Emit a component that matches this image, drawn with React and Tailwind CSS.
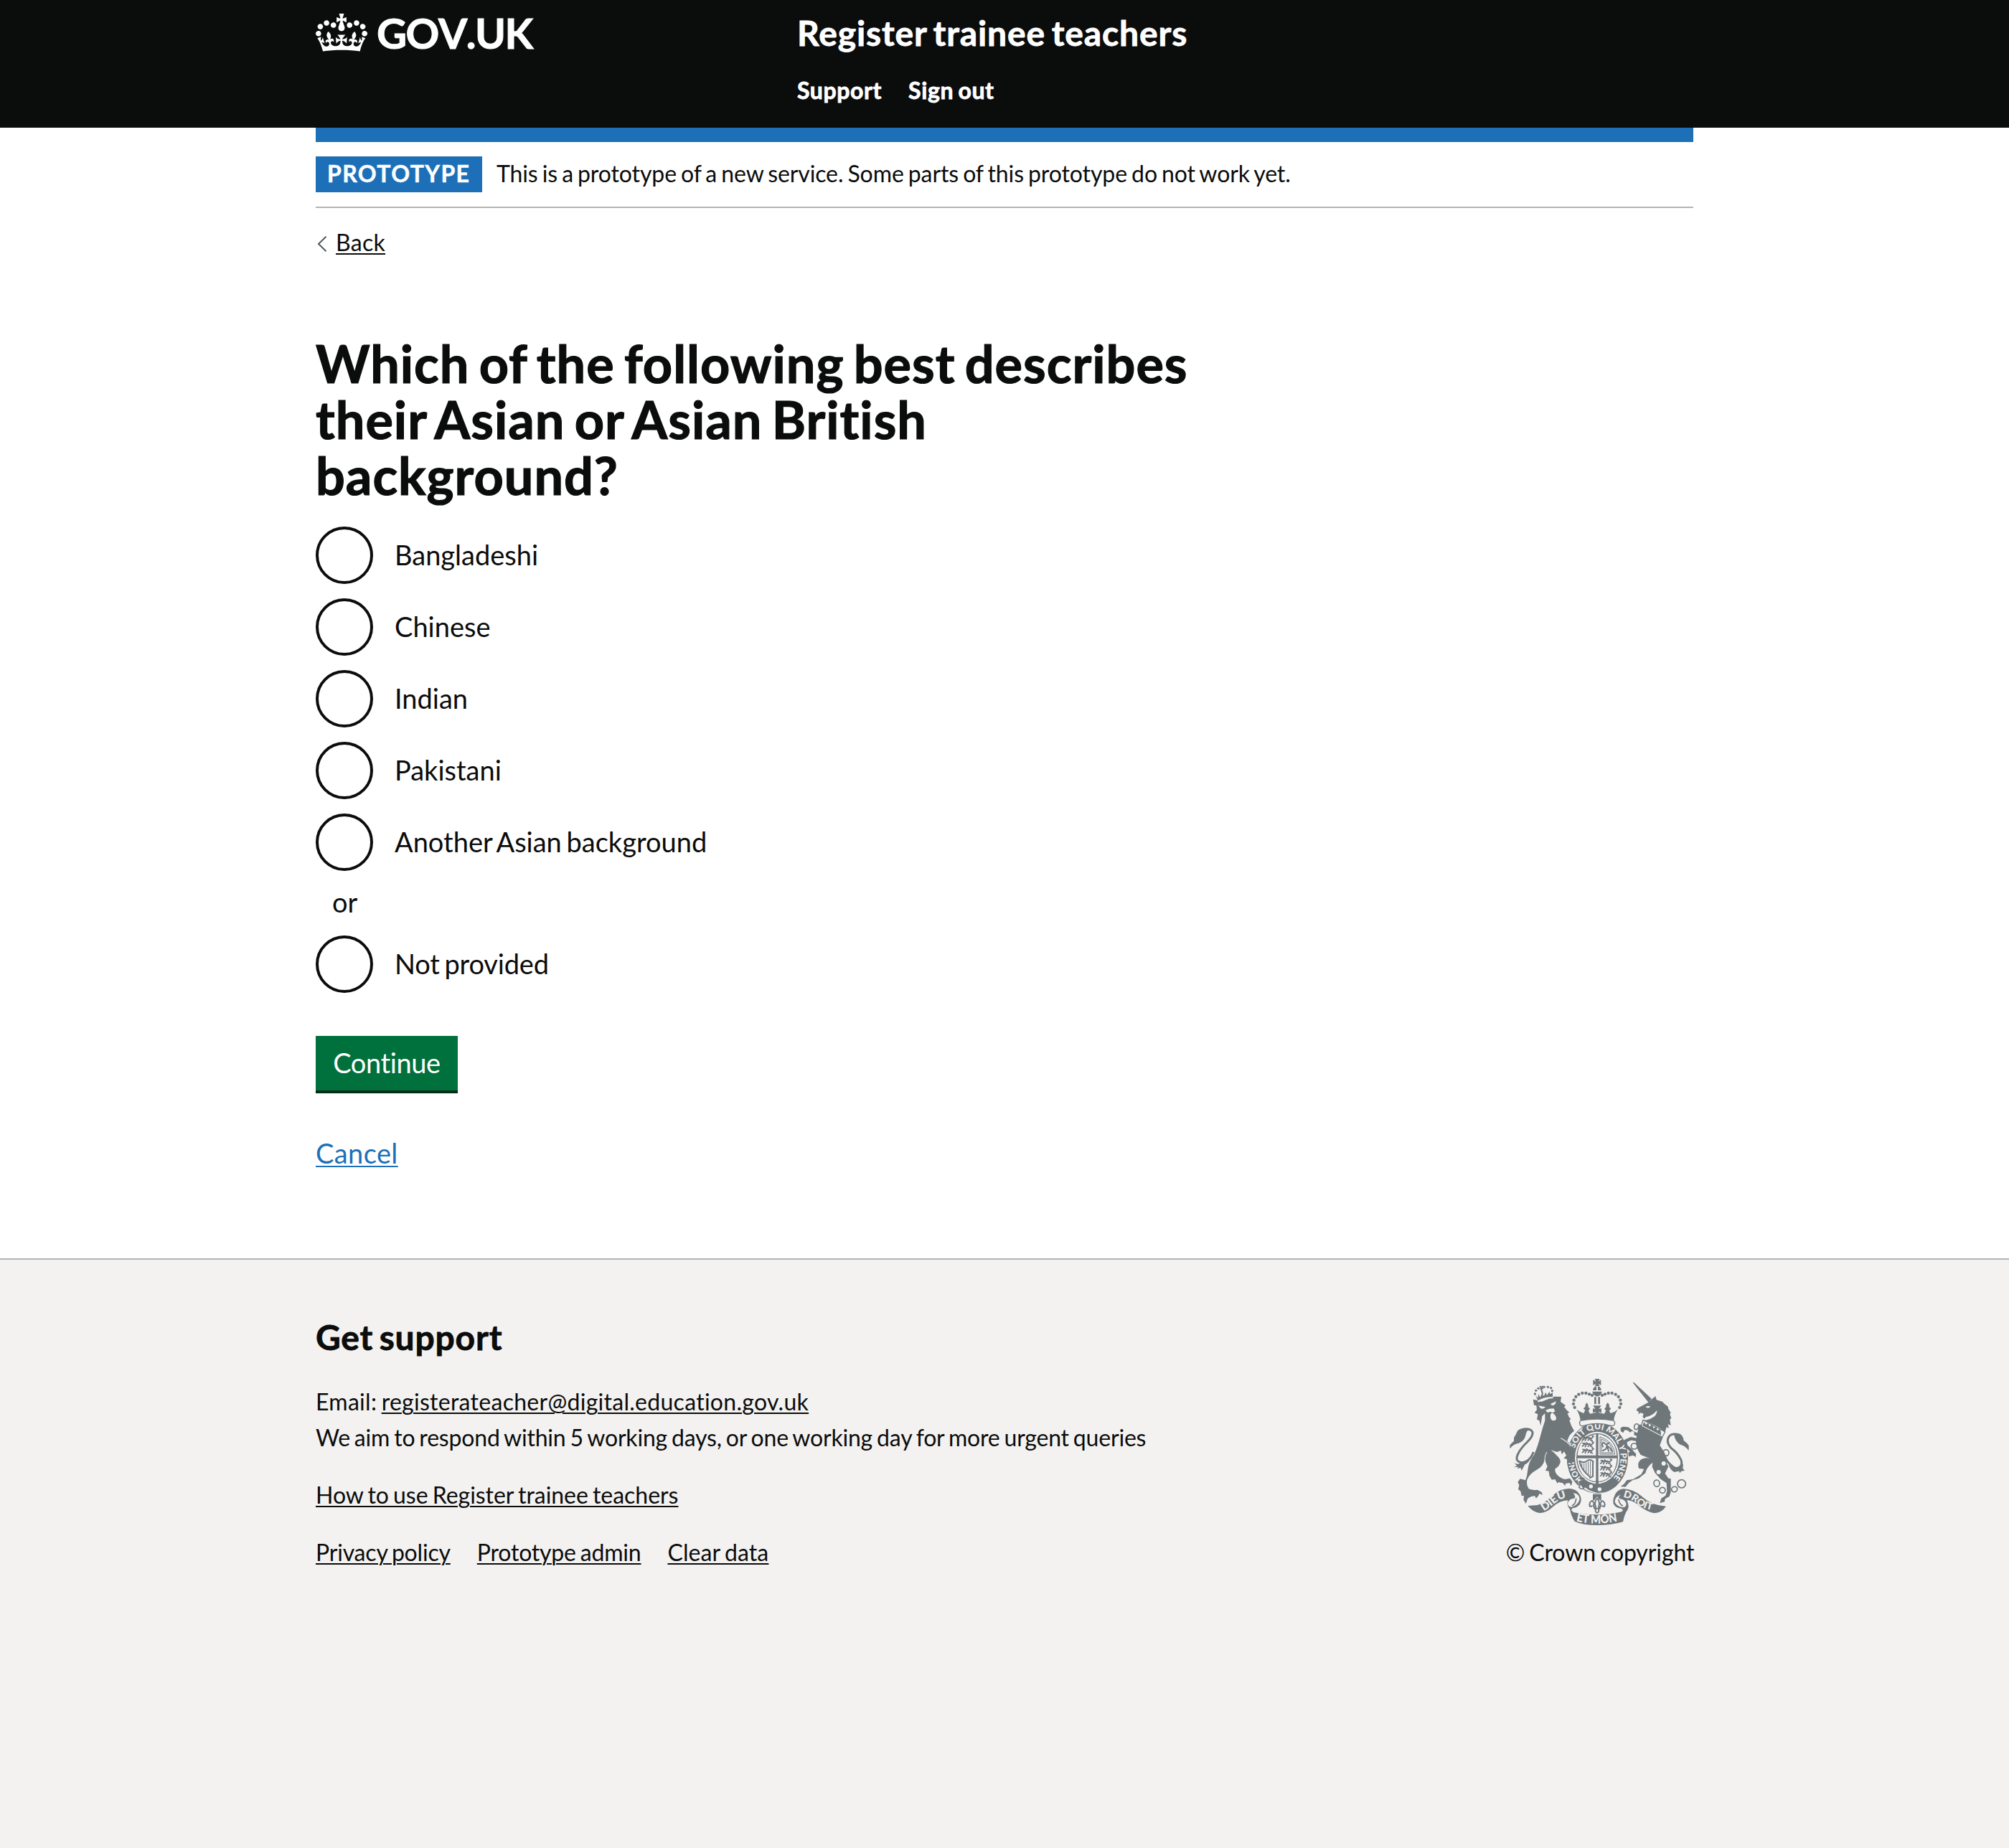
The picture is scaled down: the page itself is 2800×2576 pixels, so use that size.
const ANSWERS = ["Bangladeshi", "Chinese", "Indian", "Pakistani", "Another Asian background"];

function Crown({ className }) {
  return (
    <svg className={className} viewBox="0 0 132 97" fill="currentColor" fillRule="evenodd" aria-hidden="true">
      <path d="M25 30.2c3.5 1.5 7.7-.2 9.1-3.7 1.5-3.6-.2-7.8-3.9-9.2-3.6-1.4-7.6.3-9.1 3.9-1.4 3.5.3 7.5 3.9 9zM9 39.5c3.6 1.5 7.8-.2 9.2-3.7 1.5-3.6-.2-7.8-3.9-9.1-3.6-1.5-7.6.2-9.1 3.8-1.4 3.5.3 7.5 3.8 9zM4.4 57.2c3.5 1.5 7.7-.2 9.1-3.8 1.5-3.6-.2-7.7-3.9-9.1-3.5-1.5-7.6.3-9.1 3.8-1.4 3.5.3 7.6 3.9 9.1zm38.3-21.4c3.5 1.5 7.7-.2 9.1-3.8 1.5-3.6-.2-7.7-3.9-9.1-3.6-1.5-7.6.3-9.1 3.8-1.3 3.6.4 7.7 3.9 9.1zm64.4-5.6c-3.6 1.5-7.8-.2-9.1-3.7-1.5-3.6.2-7.8 3.8-9.2 3.6-1.4 7.7.3 9.2 3.9 1.3 3.5-.4 7.5-3.9 9zm15.9 9.3c-3.6 1.5-7.7-.2-9.1-3.7-1.5-3.6.2-7.8 3.7-9.1 3.6-1.5 7.7.2 9.2 3.8 1.5 3.5-.3 7.5-3.8 9zm4.7 17.7c-3.6 1.5-7.8-.2-9.2-3.8-1.5-3.6.2-7.7 3.9-9.1 3.6-1.5 7.7.3 9.2 3.8 1.3 3.5-.4 7.6-3.9 9.1zM89.3 35.8c-3.6 1.5-7.8-.2-9.2-3.8-1.4-3.6.2-7.7 3.9-9.1 3.6-1.5 7.7.3 9.2 3.8 1.4 3.6-.3 7.7-3.9 9.1zM69.7 17.7l8.9 4.7V9.3l-8.9 2.8c-.2-.3-.5-.6-.9-.9L72.4 0H59.6l3.5 11.2c-.3.3-.6.5-.9.9l-8.8-2.8v13.1l8.8-4.7c.3.3.6.7.9.9l-5 15.4v.1c-.2.8-.4 1.6-.4 2.4 0 4.1 3.1 7.5 7 8.1h.2c.3 0 .7.1 1 .1.4 0 .7 0 1-.1h.2c4-.6 7.1-4.1 7.1-8.1 0-.8-.1-1.7-.4-2.4V34l-5.1-15.4c.4-.2.7-.6 1-.9zM66 92.8c16.9 0 32.8 1.1 47.1 3.2 4-16.9 8.9-26.7 14-33.5l-9.6-3.4c1 4.9 1.1 7.2 0 10.2-1.5-1.4-3-4.3-4.2-8.7L108.6 76c2.8-2 5-3.2 7.5-3.3-4.4 9.4-10 11.9-13.6 11.2-4.3-.8-6.3-4.6-5.6-7.9 1-4.7 5.7-5.9 8-.5 4.3-8.7-3-11.4-7.6-8.8 7.1-7.2 7.9-13.5 2.1-21.1-8 6.1-8.1 12.3-4.5 20.8-4.7-5.4-12.1-2.5-9.5 6.2 3.4-5.2 7.9-2 7.2 3.1-.6 4.3-6.4 7.8-13.5 7.2-10.3-.9-10.9-8-11.2-13.8 2.5-.5 7.1 1.8 11 7.3L80.2 60c-4.1 4.4-8 5.3-12.3 5.4 1.4-4.4 8-11.6 8-11.6H55.5s6.4 7.2 7.9 11.6c-4.2-.1-8-1-12.3-5.4l1.4 16.4c3.9-5.5 8.5-7.7 10.9-7.3-.3 5.8-.9 12.8-11.1 13.8-7.2.6-12.9-2.9-13.5-7.2-.7-5 3.8-8.3 7.1-3.1 2.7-8.7-4.6-11.6-9.4-6.2 3.7-8.5 3.6-14.7-4.6-20.8-5.8 7.6-5 13.9 2.2 21.1-4.7-2.6-11.9.1-7.7 8.8 2.3-5.5 7.1-4.2 8.1.5.7 3.3-1.3 7.1-5.7 7.9-3.5.7-9-1.8-13.5-11.2 2.5.1 4.7 1.3 7.5 3.3l-4.7-15.4c-1.2 4.4-2.7 7.2-4.3 8.7-1.1-3-.9-5.3 0-10.2l-9.5 3.4c5 6.9 9.9 16.7 14 33.5 14.8-2.1 30.8-3.2 47.7-3.2z" />
    </svg>
  );
}

const INK = "#6f777b";
const PAPER = "#f3f2f1";

// Pearls along the arches of the large crown; the right side mirrors the left about x = 438.
const PEARLS = [[417, 135], [405, 130], [391, 126], [376, 126], [361, 131], [349, 141], [341, 155], [339, 171], [344, 186]];
const LION_PEARLS = [[178, 129], [182, 115], [192, 106], [216, 100], [232, 100], [245, 104], [250, 116]];
const CHAIN = [[602, 266, 9, 12, 15], [593, 348, 13, 12, 0], [726, 375, 12, 13, 0], [687, 503, 12, 14, -10], [711, 532, 12, 12, 0], [761, 528, 12, 11, -20]];

function Lions({ x, y }) {
  return (
    <g transform={`translate(${x} ${y})`} fill="none" stroke={INK} strokeWidth="5.5" strokeLinecap="round" strokeLinejoin="round">
      {[0, 26, 52].map((dy) => (
        <path key={dy} d={`M2 ${dy + 18}l6 -5l2 -8l8 4l14 -1l8 4l-4 6l8 3M12 ${dy + 10}l-8 -5M18 ${dy + 12}l-4 8M32 ${dy + 12}l-6 7M42 ${dy + 10}l7 -8l-6 -2M20 ${dy + 3}l5 6`} />
      ))}
    </g>
  );
}

function RoyalArms({ className }) {
  return (
    <svg className={className} viewBox="60 60 780 630" fill={INK} aria-hidden="true">
      {/* Scrolls */}
      <path d="M148 597L188 594Q216 588 250 556Q284 524 322 525Q354 527 366 552Q376 570 366 590Q352 606 338 606Q322 612 340 625Q390 634 438 634Q490 634 540 622Q552 614 538 608Q514 606 506 588Q502 572 512 552Q522 530 546 526Q592 528 628 560Q664 594 726 599Q708 626 676 628Q640 620 606 590Q582 574 562 574Q574 596 566 612Q552 632 546 664Q500 678 438 678Q376 678 344 662Q330 642 324 612Q308 594 316 574Q282 574 250 604Q224 628 196 627Q168 622 148 597Z" />
      <g fill={PAPER}>
        <path d="M338 544Q366 546 364 572Q358 592 332 602Q314 602 315 585Q322 566 342 566Q352 562 338 544Z" />
        <path d="M536 550Q512 560 512 582Q522 600 544 604Q560 604 560 588Q554 570 534 568Q522 566 536 550Z" />
      </g>
      <g fill="none" stroke={INK} strokeWidth="5" strokeLinecap="round">
        <path d="M334 596Q348 588 350 568" />
        <path d="M544 597Q530 588 528 572" />
      </g>

      {/* Garter, cut clear of the animals by a light rim */}
      <ellipse cx="439" cy="397" rx="135" ry="155" fill={PAPER} />
      <ellipse cx="439" cy="397" rx="128" ry="148" />
      <ellipse cx="438" cy="396" rx="93" ry="109" fill={PAPER} />
      <ellipse cx="438" cy="396" rx="87" ry="103" />
      <g fill={PAPER}>
        <path d="M433 297V386H356Q360 312 433 297ZM443 297V386H520Q514 312 443 297ZM433 398V496Q362 486 355 398ZM443 398V496Q514 486 521 398Z" />
      </g>
      <Lions x={374} y={304} />
      <Lions x={450} y={402} />
      {/* Scottish quarter */}
      <g fill="none" stroke={INK}>
        <path strokeWidth="3" d="M450 308V381H512Q508 328 450 308ZM456 318V375H504Q500 334 456 318Z" />
        <path strokeWidth="6" strokeLinecap="round" d="M468 334L480 346L474 360L462 366M480 346L494 358L498 368M476 340L488 334M480 350L486 368M462 350Q456 338 464 332" />
      </g>
      {/* Harp */}
      <g fill="none" stroke={INK} strokeLinecap="round">
        <path strokeWidth="6" d="M364 412Q372 448 406 474M364 410Q384 420 398 408Q410 400 422 412M420 412V474L408 480" />
        <path strokeWidth="3" d="M374 420V436M383 420V450M392 418V460M401 414V468M410 412V472" />
      </g>
      <rect x="432" y="490" width="12" height="16" />

      {/* Mottoes */}
      <defs>
        <path id="arms-honi" d="M379 490A98 118 0 0 1 341 408" />
        <path id="arms-garter" d="M345 358A98 118 0 0 1 536 396A98 118 0 0 1 496 491" />
        <path id="arms-dieu" d="M214 619Q238 606 264 584Q290 562 326 562" />
        <path id="arms-mon" d="M350 661Q438 680 526 661" />
        <path id="arms-droit" d="M546 561Q580 566 606 590Q636 612 684 617" />
      </defs>
      <g fill={PAPER} className="font-['Lato',sans-serif] font-black">
        <text fontSize="33"><textPath href="#arms-honi" textLength="88" lengthAdjust="spacingAndGlyphs">HONI</textPath></text>
        <text fontSize="35"><textPath href="#arms-garter" textLength="396" lengthAdjust="spacingAndGlyphs">SOIT QUI MAL Y PENSE</textPath></text>
        <text fontSize="44"><textPath href="#arms-dieu" textLength="112" lengthAdjust="spacingAndGlyphs">DIEU</textPath></text>
        <text fontSize="49"><textPath href="#arms-mon" textLength="174" lengthAdjust="spacingAndGlyphs">ET MON</textPath></text>
        <text fontSize="41"><textPath href="#arms-droit" textLength="134" lengthAdjust="spacingAndGlyphs">DROIT</textPath></text>
      </g>

      {/* Garter buckle and strap */}
      <path d="M370 480Q346 490 364 506Q352 522 374 528L392 514Q440 540 506 514Q496 530 470 540Q420 552 380 524L362 500Z" fill={PAPER} />
      <path d="M378 510L386 494Q434 516 494 508L520 512Q480 546 438 542Q402 538 378 510Z" />
      <path d="M366 482Q388 476 386 496Q370 506 386 518Q378 534 362 520Q372 504 360 498Q386 490 366 482Z" fill="none" stroke={INK} strokeWidth="5" />
      <g fill={PAPER}>
        <circle cx="412" cy="516" r="8" />
        <circle cx="448" cy="528" r="8" />
      </g>

      {/* Pendant lily */}
      <path d="M420 548H455V578L446 570L438 558L429 570L420 578Z" />
      <path d="M438 564Q424 584 432 602Q424 606 422 596Q430 586 416 576Q402 584 408 600L418 598M438 564Q452 584 444 602Q452 606 454 596Q446 586 460 576Q474 584 468 600L458 598M424 608H452M432 610Q428 624 438 626Q448 624 444 610" fill="none" stroke={INK} strokeWidth="6" strokeLinejoin="round" />

      {/* Large crown */}
      <path d="M428 66H449L443 77L454 70V93L443 86L449 97H428L433 86L421 93V70L433 77Z" />
      <path d="M428 99H435V114H420Q421 104 428 99ZM441 99H448Q454 104 456 114H441ZM418 119H458Q456 136 438 140Q420 136 418 119Z" />
      {PEARLS.map(([x, y]) => (
        <g key={x}>
          <circle cx={x} cy={y} r="6.5" />
          <circle cx={876 - x} cy={y} r="6.5" />
        </g>
      ))}
      <path d="M426 142H434V172H426ZM442 142H450V172H442ZM421 178H455L446 192L456 190V208L444 204L450 220H426L432 204L420 208V190L430 192Z" />
      <path d="M352 194Q368 206 382 210L388 196Q374 192 388 184Q386 176 394 166Q404 176 400 184Q414 192 401 198L408 212L438 206L468 212L475 198Q462 192 476 184Q472 176 482 166Q492 176 488 184Q502 192 488 198L494 210Q512 206 524 194Q508 220 508 240Q438 228 368 240Q366 218 352 194Z" />
      <g fill={PAPER}>
        <circle cx="377" cy="202" r="5" />
        <circle cx="411" cy="202" r="5" />
        <circle cx="465" cy="202" r="5" />
        <circle cx="499" cy="202" r="5" />
      </g>
      <path d="M370 240Q362 246 366 258Q370 266 380 262Q438 244 496 262Q510 264 512 252Q512 244 506 240Q438 228 370 240Z" fill={PAPER} stroke={INK} strokeWidth="4" />

      {/* Lion */}
      <path d="M170 152L188 156L205 162L258 140L288 141L285 162L306 178L300 184L312 198L322 207L314 211L320 226L328 234L322 240L330 262L342 284Q320 298 313 326L334 350L346 384L344 416L332 409L334 425L320 415L312 421L314 402L298 399L309 386L300 370L290 382L286 366L270 372L244 364Q262 376 270 388Q286 400 284 416Q276 436 264 440Q258 450 268 464Q280 480 304 486L324 482L334 496L330 514L322 501L306 504L304 514L294 502L276 498L272 504L262 486L248 488L238 470L236 452L222 450L230 432L218 404Q214 430 186 446Q156 462 146 486Q140 510 152 526Q170 534 188 530L206 540L210 552L196 546L192 556L182 566L178 556L162 558L148 566L140 588L130 572L132 554L122 556L118 536L108 528L112 510L106 498L116 484L138 490Q146 472 148 446Q152 412 174 384Q190 348 202 300Q210 270 220 240L220 210L208 222L202 262L196 240L186 236L190 214L176 208L186 196L184 178L174 176Z" />
      <path d="M286 314Q312 326 328 348" fill="none" stroke={PAPER} strokeWidth="3.5" />
      <path d="M228 372Q212 396 224 428" fill="none" stroke={PAPER} strokeWidth="3" />
      <g fill={PAPER}>
        <path d="M192 178L222 184Q214 194 202 190ZM242 172L266 160Q264 176 252 178ZM222 198L238 191L256 190L262 202L252 208L240 203L232 208ZM244 212Q250 206 257 212Q270 226 266 236Q256 246 246 236Q240 226 244 212Z" />
      </g>
      <path d="M172 372Q158 410 126 416Q92 414 106 382Q118 356 146 330Q170 306 168 290Q160 272 140 280" fill="none" stroke={INK} strokeWidth="9" />
      <path d="M154 272Q126 268 106 282Q98 300 90 312L90 326Q78 336 73 344L73 358Q88 338 108 336Q132 328 138 306Q140 288 154 272ZM92 418Q106 426 116 418L132 410L156 406Q148 420 136 424L122 450L118 438L104 442L108 434L90 436L102 430Z" />
      {/* Lion's crown */}
      <g>
        {LION_PEARLS.map(([x, y]) => <circle key={`${x}-${y}`} cx={x} cy={y} r="5" />)}
        <path d="M198 97L212 108M211 96L200 110M204 108L210 130" stroke={INK} strokeWidth="6" fill="none" />
        <path d="M180 134L190 146L192 130L200 143L208 126L215 139L223 122L228 136L238 120L242 130L252 122L252 146Q218 146 192 162Z" />
        <path d="M188 158Q220 140 254 142L253 148Q220 148 192 164Z" fill={PAPER} />
      </g>

      {/* Unicorn */}
      <path d="M587 82L592 81L666 150L652 164ZM652 164L668 150L682 138L686 154L712 162L716 168L734 182L736 192L746 208L742 214L748 230L742 236L746 260L734 256L738 272L728 268L722 288L690 266L634 240Q650 232 664 220L648 228L636 232L628 226L632 212L620 208L610 214L612 204L602 198L606 190Q630 176 652 164Z" />
      <g fill={PAPER}>
        <path d="M640 183Q650 177 661 182Q656 189 647 187ZM640 226Q668 222 688 198Q690 212 676 224Q660 236 638 240Z" />
      </g>
      <path d="M614 256Q656 268 712 312L700 344L718 372L734 408Q724 416 736 432L722 462L736 482L746 484L746 540L740 558L722 568L720 580L700 586L706 566L724 554L730 536L728 502L704 486L680 460L668 434L670 416Q644 436 640 460L612 482L586 490L570 502L556 518L536 516L550 506L562 490L588 486L622 466L634 444L612 440Q604 414 624 402Q644 392 666 402L620 384Q606 364 600 336L604 300Z" />
      {/* Forelegs */}
      <g fill="none" stroke={INK} strokeWidth="13" strokeLinejoin="round">
        <path d="M612 302L586 290L566 274L548 273L542 288" />
        <path d="M612 322L580 316L556 326L558 346L580 366L588 376" />
      </g>
      <path d="M534 276L542 266L552 276L546 292ZM568 374L584 366L600 378L600 393L588 386L570 391Z" />
      {/* Collar coronet */}
      <path d="M630 238L722 288L710 310L622 264Z" fill={PAPER} stroke={INK} strokeWidth="4" />
      <path d="M628 262L634 246L642 258L652 250L656 266L668 256L674 274L686 264L688 282L702 276L706 302Z" />
      {/* Tail */}
      <path d="M722 398Q744 430 766 440Q796 440 790 408Q776 376 748 356Q724 330 738 308Q748 294 770 298" fill="none" stroke={INK} strokeWidth="9" />
      <path d="M758 294Q786 290 794 306Q800 316 800 324Q816 336 821 346L821 366Q806 346 788 342Q764 332 758 294ZM736 424Q756 440 768 442L790 430L798 420L796 440L804 450L790 452L784 460L780 452L760 456Q744 448 736 424Z" />
      {/* Chain */}
      <g fill={PAPER}>
        <circle cx="585" cy="293" r="8" />
        <circle cx="716" cy="420" r="9" />
        <circle cx="695" cy="456" r="9" />
      </g>
      <g fill="none" stroke={INK} strokeWidth="5">
        {CHAIN.map(([x, y, rx, ry, a]) => <ellipse key={x} cx={x} cy={y} rx={rx} ry={ry} transform={`rotate(${a} ${x} ${y})`} />)}
        <circle cx="791" cy="505" r="17" />
      </g>
    </svg>
  );
}

function Radio({ className = "tracking-[0.1px]", children }) {
  return (
    <label className="flex h-20 items-start">
      <span className="size-20 shrink-0 rounded-full border-4 border-[#0b0c0c] bg-white" />
      <span className={`ml-[30px] text-[38px] leading-[78px] [word-spacing:-3px] ${className}`}>{children}</span>
    </label>
  );
}

function Link({ className = "", children }) {
  return (
    <a href="#" className={`underline decoration-2 underline-offset-[3px] ${className}`}>{children}</a>
  );
}

export default function App() {
  return (
    <div className="flex min-h-[2576px] flex-col bg-white font-['Lato',sans-serif] text-[#0b0c0c] antialiased">
      <header className="h-[178px] bg-[#0b0c0c] text-white">
        <div className="mx-auto flex w-[1920px]">
          <a href="#" className="flex w-[671px] items-start pt-[19px]">
            <Crown className="h-[53px] w-[72px]" />
            <span className="ml-[13px] text-[58px] leading-[53px] font-bold tracking-[-1.5px] [-webkit-text-stroke:1px] [font-kerning:none]">GOV.UK</span>
          </a>
          <div className="pt-[15px] [-webkit-text-stroke:0.8px]">
            <div className="text-[48px] leading-[61px] font-bold tracking-[0.9px] [word-spacing:-4px]">Register trainee teachers</div>
            <nav className="mt-[29px] flex gap-[37px] text-[32px] leading-[41px] font-bold tracking-[0.6px]">
              <a href="#">Support</a>
              <a href="#" className="[word-spacing:-2px]">Sign out</a>
            </nav>
          </div>
        </div>
      </header>

      <div className="mx-auto w-[1920px]">
        <div className="h-5 bg-[#1d70b8]" />
        <div className="flex h-[92px] items-start border-b-2 border-[#b1b4b6] pt-5 text-[32px] leading-[47px]">
          <strong className="h-[50px] w-[232px] bg-[#1d70b8] pl-4 font-bold tracking-[1.4px] text-white [-webkit-text-stroke:0.5px]">PROTOTYPE</strong>
          <span className="ml-5 tracking-[-0.1px] [word-spacing:-2px]">This is a prototype of a new service. Some parts of this prototype do not work yet.</span>
        </div>

        <div className="mt-[27px] flex items-center text-[32px] leading-[41px]">
          <svg className="mt-1 ml-[2px] h-[22px] w-[14px]" viewBox="0 0 14 22" fill="none" stroke="#505a5f" strokeWidth="2">
            <path d="M12.5 .8L2 11L12.5 21.2" />
          </svg>
          <Link className="ml-3 tracking-[0.3px]">Back</Link>
        </div>

        <main>
          <h1 className="mt-[109px] w-[1270px] text-[72px] leading-[78px] font-bold tracking-[1px] [word-spacing:-5.2px] [-webkit-text-stroke:1.2px]">
            Which of the following best describes
            <br />
            their Asian or Asian British
            <br />
            background?
          </h1>

          <div className="mt-[33px] flex flex-col gap-5">
            {ANSWERS.map((answer) => <Radio key={answer} className="tracking-[0px]">{answer}</Radio>)}
          </div>
          <div className="mt-[18px] mb-[22px] pl-[23px] text-[38px] leading-[50px]">or</div>
          <Radio className="tracking-[-0.15px]">Not provided</Radio>

          <button type="button" className="mt-[60px] block h-20 w-[198px] border-b-4 border-[#002d18] bg-[#00703c] text-[38px] text-white">
            <span className="block h-[76px] leading-[74px] tracking-[-0.4px]">Continue</span>
          </button>
          <div className="mt-[58px] text-[38px] leading-[50px]">
            <Link className="tracking-[0.4px] text-[#1d70b8]">Cancel</Link>
          </div>
        </main>
      </div>

      <footer className="mt-[122px] grow border-t-2 border-[#b1b4b6] bg-[#f3f2f1] pt-[77px]">
        <div className="mx-auto flex w-[1920px] items-end justify-between text-[32px] leading-[51px]">
          <div>
            <h2 className="mb-[34px] text-[48px] leading-[61px] font-bold tracking-[0.8px] [word-spacing:-4px] [-webkit-text-stroke:0.8px]">Get support</h2>
            <div className="h-[50px] tracking-[0.28px] [word-spacing:-2px]">Email: <Link>registerateacher@digital.education.gov.uk</Link></div>
            <div className="h-[50px] tracking-[-0.19px] [word-spacing:-2px]">We aim to respond within 5 working days, or one working day for more urgent queries</div>
            <div className="mt-[30px] h-[50px] tracking-[-0.03px] [word-spacing:-2px]"><Link>How to use Register trainee teachers</Link></div>
            <div className="mt-[30px] flex h-[50px] gap-[37px] tracking-[-0.2px] [word-spacing:-2px]">
              <Link>Privacy policy</Link>
              <Link>Prototype admin</Link>
              <Link className="tracking-[0.1px]">Clear data</Link>
            </div>
          </div>
          <div className="flex w-[260px] flex-col items-center">
            <RoyalArms className="h-[210px] w-[260px]" />
            <div className="mt-2 h-[50px] tracking-[-0.1px] whitespace-nowrap [word-spacing:-2px]">© Crown copyright</div>
          </div>
        </div>
      </footer>
    </div>
  );
}
